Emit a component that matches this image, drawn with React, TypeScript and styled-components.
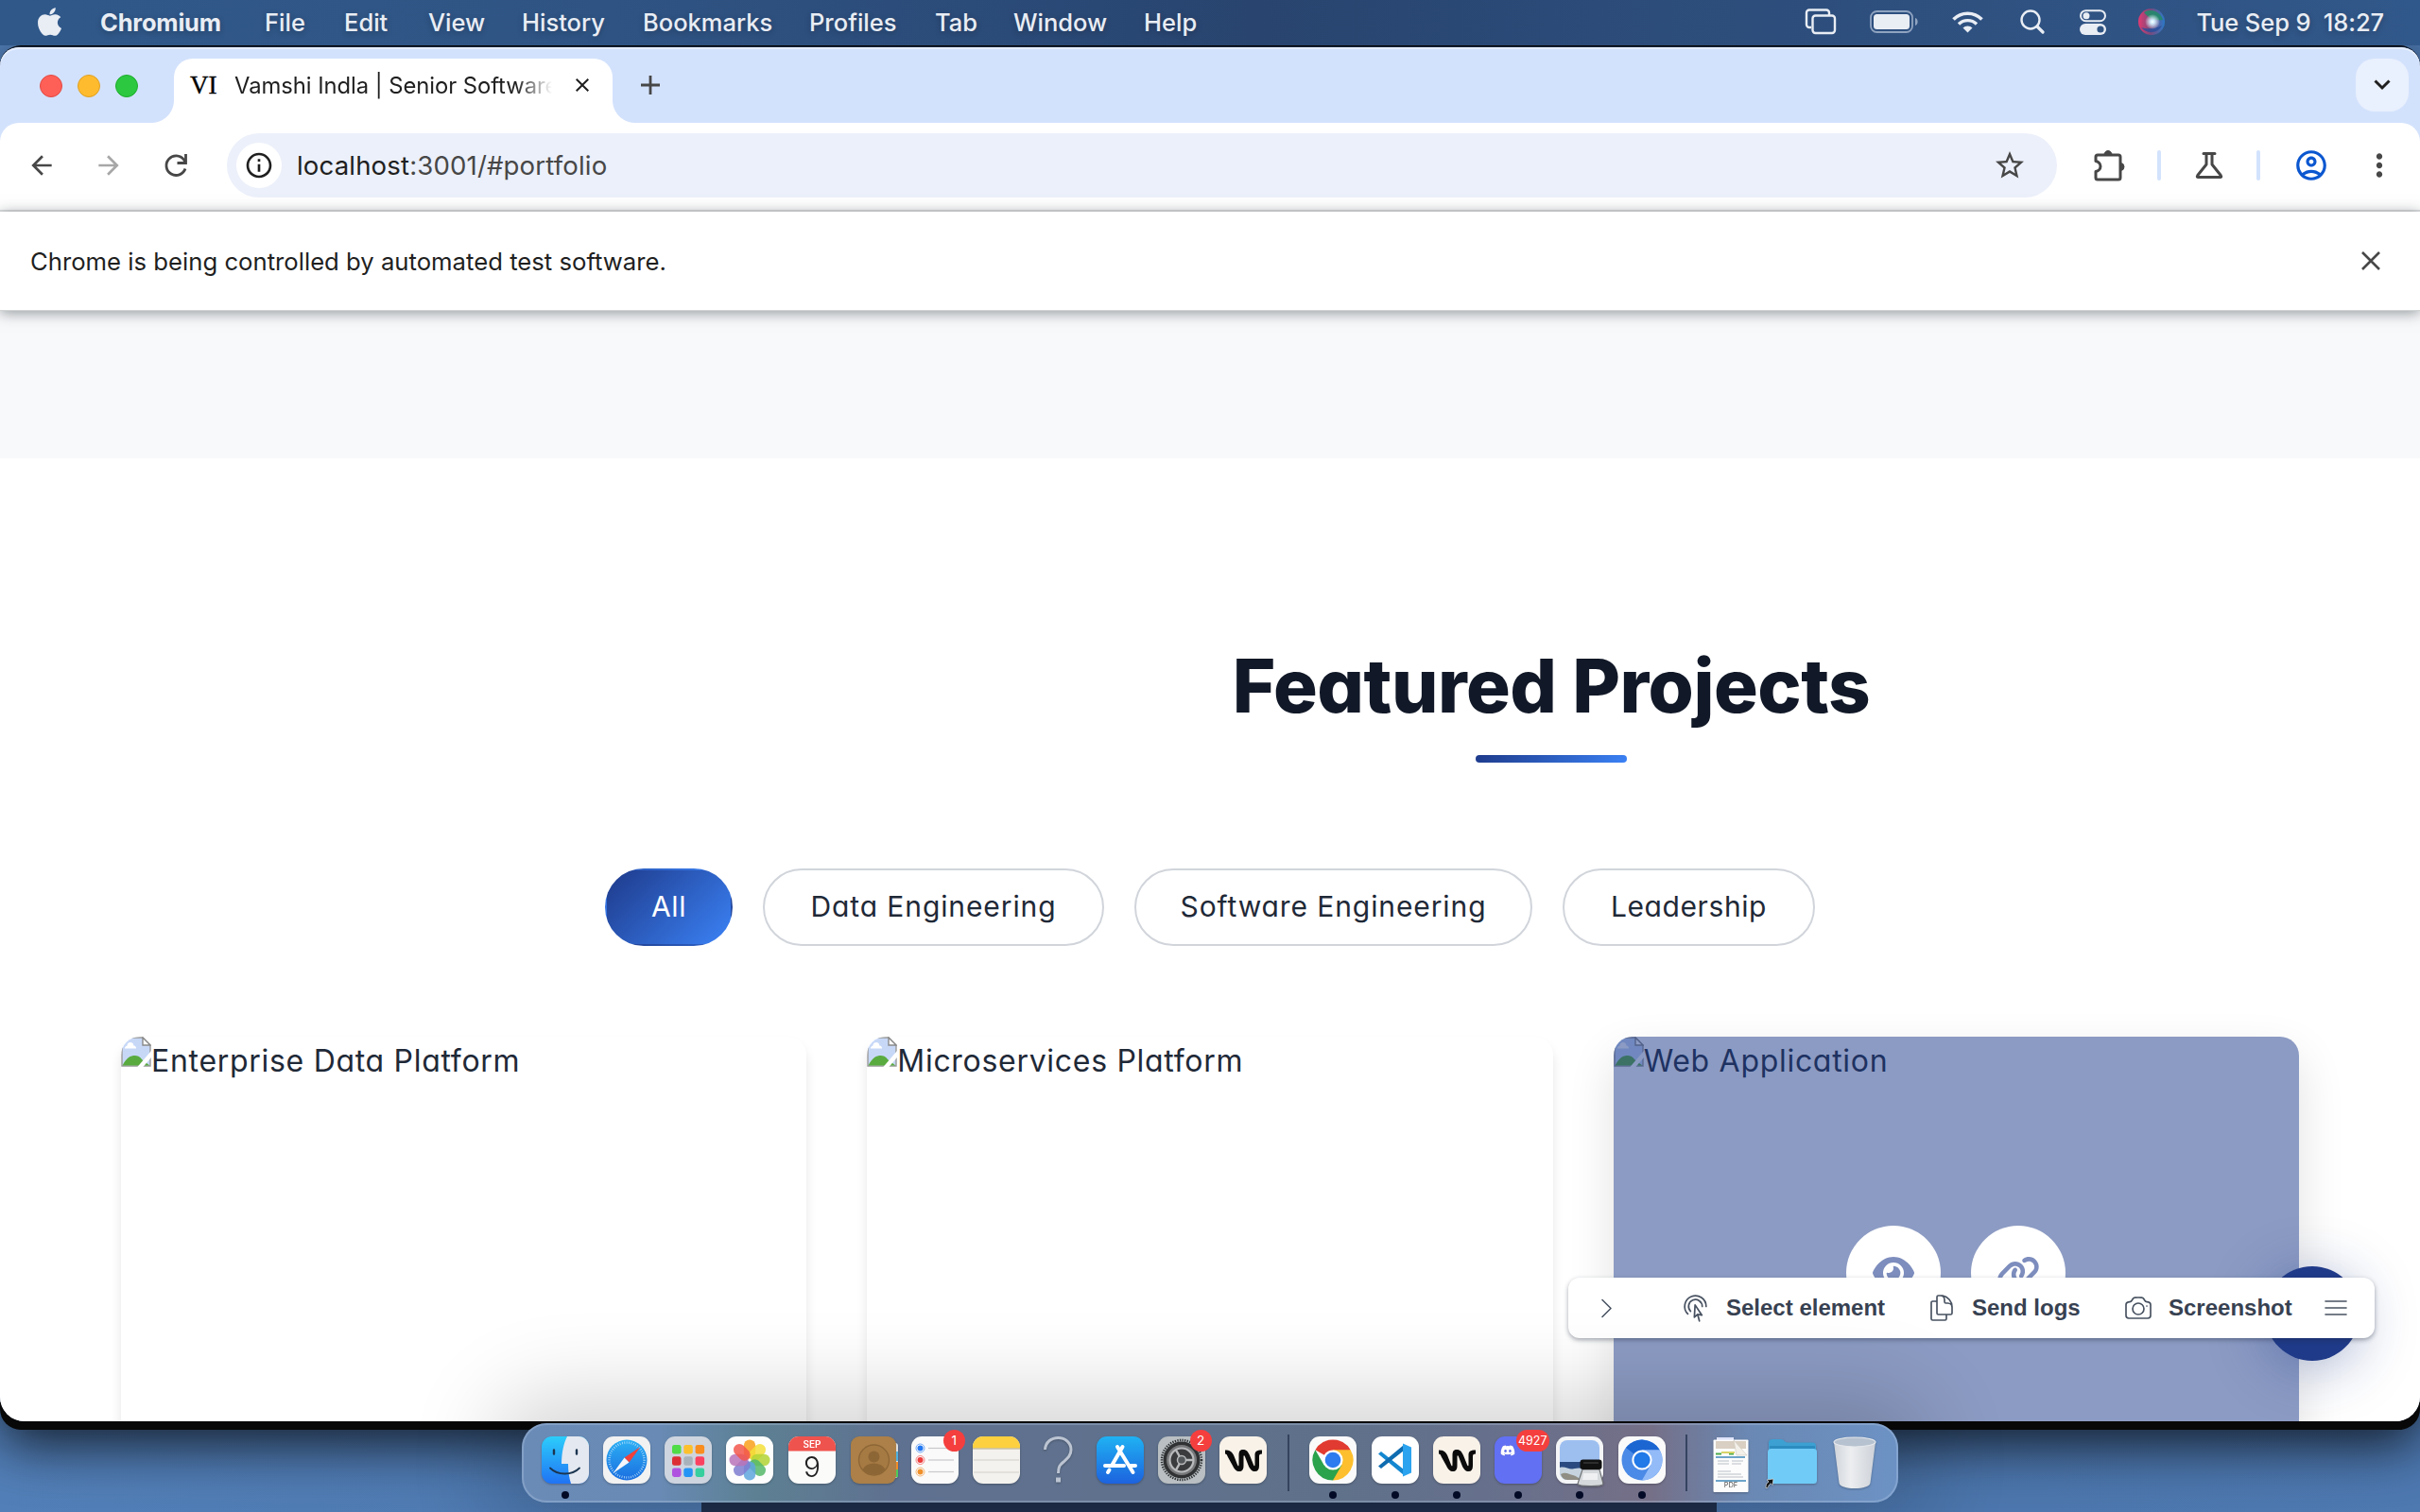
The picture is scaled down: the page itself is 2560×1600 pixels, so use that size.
import React from "react";
import styled, { createGlobalStyle, css } from "styled-components";
import { FaApple, FaEye, FaLink, FaDiscord } from "react-icons/fa6";
import {
  HiOutlineBars3,
  HiOutlineCamera,
  HiOutlineChevronRight,
  HiOutlineCursorArrowRipple,
  HiOutlineDocumentDuplicate,
} from "react-icons/hi2";
import {
  MdArrowBack,
  MdArrowForward,
  MdClose,
  MdInfoOutline,
  MdMoreVert,
  MdOutlineAccountCircle,
  MdStarBorder,
} from "react-icons/md";

const ui = `Inter, "Liberation Sans", sans-serif`;

const GlobalStyle = createGlobalStyle`
  * { box-sizing: border-box; }
  body { margin: 0; background: #4f79b0; overflow: hidden; font-family: ${ui}; }
  svg { display: block; flex: none; }
`;

/* ---------- Desktop ---------- */

const Desktop = styled.div`
  position: relative;
  width: 2560px;
  height: 1600px;
  overflow: hidden;
  background: linear-gradient(90deg, #527fb8 0%, #4a73a8 50%, #4d78b0 100%);
`;

const BackWindow = styled.div`
  position: absolute;
  left: 742px;
  top: 48px;
  width: 1074px;
  height: 1552px;
  background: #20304e;
`;

const UnderWindow = styled.div`
  position: absolute;
  left: 0;
  top: 48px;
  width: 2560px;
  height: 1465px;
  border-radius: 22px;
  background: #080808;
  box-shadow: 0 16px 56px rgba(0, 0, 0, 0.75);
`;

/* ---------- Menu bar ---------- */

const MenuBar = styled.header`
  position: relative;
  display: flex;
  align-items: center;
  height: 48px;
  padding: 0 38px 2px 38px;
  background: linear-gradient(90deg, #30598a 0%, #2f5484 25%, #28446f 52%, #2c4b78 66%, #31588a 100%);
  color: #e9edf4;
  font-size: 25.5px;
  text-shadow: 0 2px 6px rgba(0, 0, 0, 0.25);
`;

const AppleMark = styled(FaApple)`
  width: 29px;
  height: 34px;
  margin-right: 39px;
`;

const MenuItem = styled.span<{ $w: number; $bold?: boolean; $ls?: number }>`
  width: ${(p) => p.$w}px;
  white-space: nowrap;
  font-weight: ${(p) => (p.$bold ? 700 : 500)};
  letter-spacing: ${(p) => p.$ls ?? 0}px;
`;

const StatusArea = styled.div`
  display: flex;
  align-items: center;
  margin-left: auto;
`;

const StatusSlot = styled.span<{ $gap: number }>`
  margin-right: ${(p) => p.$gap}px;
`;

const Clock = styled.span`
  font-weight: 500;
  white-space: pre;
  letter-spacing: -0.1px;
`;

/* ---------- Browser window ---------- */

const Window = styled.main`
  position: absolute;
  left: 0;
  top: 50px;
  width: 2560px;
  height: 1454px;
  display: flex;
  flex-direction: column;
  border-radius: 20px 20px 26px 26px;
  overflow: hidden;
  background: #d3e2fc;
  box-shadow: 0 -1px 0 #16243a, inset 0 2px 0 #e6effe;
`;

const TabStrip = styled.div`
  display: flex;
  align-items: center;
  height: 80px;
  padding: 12px 12px 0 42px;
`;

const Lights = styled.div`
  display: flex;
  gap: 16px;
  width: 142px;
  padding-bottom: 10px;
`;

const Light = styled.i<{ $c: string; $b: string }>`
  width: 24px;
  height: 24px;
  border-radius: 50%;
  background: ${(p) => p.$c};
  border: 1px solid ${(p) => p.$b};
`;

const Tab = styled.div`
  position: relative;
  display: flex;
  align-items: center;
  width: 464px;
  height: 68px;
  padding: 0 18px 12px 17px;
  border-radius: 20px 20px 0 0;
  background: #fff;
  &::before,
  &::after {
    content: "";
    position: absolute;
    bottom: 0;
    width: 24px;
    height: 24px;
  }
  &::before {
    left: -24px;
    background: radial-gradient(circle at 0 0, transparent 23.5px, #fff 24.5px);
  }
  &::after {
    right: -24px;
    background: radial-gradient(circle at 100% 0, transparent 23.5px, #fff 24.5px);
  }
`;

const Favicon = styled.span`
  width: 47px;
  font-family: "Liberation Serif", serif;
  font-size: 27px;
  color: #000;
  -webkit-text-stroke: 0.4px #000;
`;

const TabTitle = styled.span`
  width: 336px;
  overflow: hidden;
  white-space: nowrap;
  font-size: 23.8px;
  letter-spacing: -0.05px;
  color: #1f1f1f;
  mask-image: linear-gradient(90deg, #000 298px, transparent 336px);
`;

const TabClose = styled(MdClose)`
  width: 24px;
  height: 24px;
  margin-left: 20px;
  color: #1f1f1f;
`;

const NewTab = styled.div`
  display: flex;
  margin: 0 auto 12px 28px;
`;

const TabSearch = styled.div`
  display: flex;
  align-items: center;
  justify-content: center;
  width: 56px;
  height: 56px;
  margin-bottom: 12px;
  border-radius: 20px;
  background: #e9f0fe;
`;

const Toolbar = styled.div`
  display: flex;
  align-items: center;
  height: 94px;
  padding: 0 28px 2px 28px;
  border-bottom: 2px solid #dfe1e2;
  border-radius: 20px 20px 0 0;
  background: #fff;
  color: #474747;
`;

const NavIcons = styled.div`
  display: flex;
  gap: 39px;
  width: 212px;
  svg {
    width: 32px;
    height: 32px;
  }
  svg:nth-child(2) {
    color: #a7a7a7;
  }
`;

const Omnibox = styled.div`
  display: flex;
  align-items: center;
  width: 1936px;
  height: 68px;
  padding: 0 32px 0 10px;
  border-radius: 34px;
  background: #ecf0fa;
`;

const SiteInfo = styled.div`
  display: flex;
  align-items: center;
  justify-content: center;
  width: 48px;
  height: 48px;
  margin-right: 16px;
  border-radius: 50%;
  background: #fff;
  color: #1f1f1f;
`;

const Url = styled.span`
  flex: 1;
  font-size: 27.6px;
  letter-spacing: 0.14px;
  color: #474747;
  b {
    font-weight: 400;
    color: #1f1f1f;
  }
`;

const ToolbarActions = styled.div`
  display: flex;
  flex: 1;
  align-items: center;
  justify-content: space-between;
  padding-left: 36px;
  margin-right: -4px;
`;

const Divider = styled.i`
  width: 4px;
  height: 32px;
  border-radius: 2px;
  background: #d3e3fd;
`;

const InfoBar = styled.div`
  position: relative;
  z-index: 1;
  display: flex;
  align-items: center;
  justify-content: space-between;
  height: 105px;
  padding: 0 36px 0 32px;
  background: #fff;
  border-bottom: 1px solid #cfd3d2;
  font-size: 25.7px;
  color: #1f1f1f;
  box-shadow: 0 2px 14px rgba(40, 50, 55, 0.5);
`;

/* ---------- Portfolio page ---------- */

const Page = styled.div`
  position: relative;
  flex: 1;
  overflow: hidden;
  background: #fff;
  color: #1f2937;
  font-feature-settings: "cv11";
`;

const PreviousSection = styled.div`
  height: 156px;
  background: #f8f9fb;
`;

const Portfolio = styled.section`
  display: flex;
  flex-direction: column;
  padding: 192px 128px 0;
`;

const Heading = styled.div`
  display: flex;
  flex-direction: column;
  align-items: center;
  padding-left: 722px;
  margin-bottom: 112px;
`;

const Title = styled.h2`
  margin: 0;
  font-size: 78px;
  line-height: 98px;
  font-weight: 800;
  letter-spacing: -0.5px;
  white-space: nowrap;
  color: #111827;
`;

const Underline = styled.i`
  width: 160px;
  height: 8px;
  margin-top: 24px;
  border-radius: 4px;
  background: linear-gradient(135deg, #1e3a8a, #3b82f6);
`;

const Filters = styled.div`
  display: flex;
  justify-content: center;
  gap: 32px;
  margin-bottom: 96px;
`;

const Filter = styled.button<{ $active?: boolean; $w: number; $ls?: number }>`
  width: ${(p) => p.$w}px;
  height: 82px;
  padding: 0 0 2px;
  border: 2px solid #d1d5db;
  border-radius: 41px;
  background: #fff;
  color: #1f2937;
  font: 400 30px ${ui};
  font-feature-settings: "cv11";
  letter-spacing: ${(p) => p.$ls ?? 0}px;
  white-space: nowrap;
  ${(p) =>
    p.$active &&
    css`
      border-color: transparent;
      background: linear-gradient(135deg, #1e3a8a, #3b82f6);
      color: #fff;
    `}
`;

const Cards = styled.div`
  display: grid;
  grid-template-columns: repeat(3, 725.33px);
  gap: 64px;
`;

const Card = styled.article`
  position: relative;
  display: flex;
  height: 500px;
  border-radius: 20px;
  overflow: hidden;
  background: #fff;
`;

const CardShadow = styled.div<{ $deep?: boolean }>`
  border-radius: 20px;
  box-shadow: ${(p) =>
    p.$deep ? "0 20px 50px rgba(0, 0, 0, 0.12)" : "0 8px 12px rgba(0, 0, 0, 0.1)"};
`;

const AltText = styled.span<{ $ls: number }>`
  font-size: 32px;
  line-height: 52px;
  letter-spacing: ${(p) => p.$ls}px;
  white-space: nowrap;
`;

const Overlay = styled.div`
  position: absolute;
  inset: 0;
  display: flex;
  align-items: center;
  justify-content: center;
  gap: 32px;
  background: rgba(30, 58, 138, 0.51);
`;

const RoundLink = styled.a`
  display: flex;
  align-items: center;
  justify-content: center;
  width: 100px;
  height: 100px;
  border-radius: 50%;
  background: #fff;
  color: #7d8dbd;
`;

const BackToTop = styled.div`
  position: absolute;
  left: 2396px;
  top: 1011px;
  width: 100px;
  height: 100px;
  border-radius: 50%;
  background: #1f3a88;
  box-shadow: 0 8px 60px rgba(30, 58, 138, 0.38);
`;

const DevToolbar = styled.div`
  position: absolute;
  left: 1659px;
  top: 1023px;
  width: 853px;
  height: 64px;
  display: flex;
  align-items: center;
  border-radius: 12px;
  overflow: hidden;
  background: #fff;
  box-shadow: 0 2px 5px rgba(30, 41, 59, 0.4);
  color: #475160;
  svg path {
    stroke-width: 1.25;
  }
`;

const DevCell = styled.div<{ $w: number; $pad: number; $tint?: boolean }>`
  display: flex;
  align-items: center;
  width: ${(p) => p.$w}px;
  height: 100%;
  padding-left: ${(p) => p.$pad}px;
  background: ${(p) => (p.$tint ? "#fcfcfd" : "transparent")};
`;

const DevLabel = styled.span`
  margin-left: 16px;
  font: 700 24px "Liberation Sans", Arial, sans-serif;
  font-feature-settings: normal;
  color: #374151;
  white-space: nowrap;
`;

/* ---------- Dock ---------- */

const Dock = styled.nav`
  position: absolute;
  left: 552px;
  top: 1506px;
  width: 1456px;
  height: 84px;
  display: flex;
  padding: 14px 13px 0;
  border-radius: 26px;
  background: linear-gradient(
    90deg,
    #6b8bb7 0%,
    #688ab4 10%,
    #5d8093 17%,
    #5f7190 27%,
    #5f718a 58%,
    #66708c 70%,
    #756f87 82%,
    #6a88b3 89%,
    #6c92c4 100%
  );
  box-shadow: inset 0 0 0 2px rgba(190, 210, 235, 0.3), 0 0 90px 30px rgba(0, 0, 0, 0.17);
`;

const DockItem = styled.div<{ $w?: number }>`
  position: relative;
  display: flex;
  flex-direction: column;
  align-items: center;
  width: ${(p) => p.$w ?? 66}px;
  margin-left: -0.08px;
  svg {
    overflow: visible;
    filter: drop-shadow(0 1px 1px rgba(0, 0, 0, 0.25));
  }
`;

const RunDot = styled.i`
  width: 8px;
  height: 8px;
  margin-top: 8px;
  border-radius: 50%;
  background: #030a26;
`;

const DockRule = styled.i`
  width: 2px;
  height: 60px;
  margin: -2px 14px 0 14px;
  background: #35435f;
`;

const Badge = styled.span<{ $wide?: boolean }>`
  position: absolute;
  top: -7px;
  right: ${(p) => (p.$wide ? 0 : 1)}px;
  width: ${(p) => (p.$wide ? 35 : 23)}px;
  height: 23px;
  border-radius: 12px;
  background: #f43f3e;
  color: #fff;
  font-size: ${(p) => (p.$wide ? 12.5 : 13.5)}px;
  line-height: 23px;
  text-align: center;
`;

/* ---------- Drawings ---------- */

const Tile = ({ children, fill = "#fafafa" }: { children?: React.ReactNode; fill?: string }) => (
  <svg width="50" height="50" viewBox="0 0 50 50">
    <rect width="50" height="50" rx="11" fill={fill} />
    {children}
  </svg>
);

const Finder = () => (
  <svg width="50" height="50" viewBox="0 0 50 50">
    <defs>
      <linearGradient id="fb" x1="0" y1="0" x2="0" y2="1">
        <stop offset="0" stopColor="#2ccdfb" />
        <stop offset="1" stopColor="#2073f4" />
      </linearGradient>
      <clipPath id="fc"><rect width="50" height="50" rx="11" /></clipPath>
    </defs>
    <g clipPath="url(#fc)">
      <rect width="50" height="50" fill="url(#fb)" />
      <path d="M27 0C23 8 21 18 21 29h7c0 8 1 15 3 21h19V0z" fill="#e4e8f0" />
      <path d="M13 14.500v4M37 14.500v4" stroke="#1c3550" strokeWidth="2.400" strokeLinecap="round" />
      <path d="M9 33.500c8 8 23 8 31 0" fill="none" stroke="#1c3550" strokeWidth="1.800" strokeLinecap="round" />
    </g>
  </svg>
);

const Safari = () => (
  <Tile fill="#f2f2f2">
    <defs>
      <linearGradient id="sa" x1="0" y1="0" x2="0" y2="1">
        <stop offset="0" stopColor="#2cb0f4" />
        <stop offset="1" stopColor="#1b6fe0" />
      </linearGradient>
    </defs>
    <circle cx="25" cy="25" r="21.500" fill="url(#sa)" />
    <circle cx="25" cy="25" r="18.500" fill="none" stroke="#bfe2fb" strokeWidth="2.500" strokeDasharray=".7 1.700" />
    <path d="M39.500 11 27.500 27.500 22.500 22.500z" fill="#f2413b" />
    <path d="M10.500 39 22.500 22.500l5 5z" fill="#f5f7fa" />
  </Tile>
);

const padColors = ["#4fdc46", "#fcc02d", "#f98d1f", "#dc2f35", "#a8b2ba", "#fb4160", "#b052e0", "#2495f5", "#36cf9d"];
const Launchpad = () => (
  <Tile fill="#ced5df">
    {padColors.map((c, i) => (
      <rect key={c} x={8 + (i % 3) * 12.3} y={9 + Math.floor(i / 3) * 12.2} width="9.500" height="9.500" rx="2.300" fill={c} />
    ))}
  </Tile>
);

const petals = ["#f9a01b", "#f3df3a", "#b3d334", "#55b96a", "#5ea6de", "#7e7cd0", "#b873b8", "#f2564b"];
const Photos = () => (
  <Tile fill="#fdfdfd">
    {petals.map((c, i) => (
      <rect key={c} x="18.800" y="3.500" width="12.400" height="20" rx="6.200" fill={c} fillOpacity=".85" transform={`rotate(${i * 45} 25 25)`} />
    ))}
  </Tile>
);

const Calendar = () => (
  <Tile fill="#fbfbfa">
    <path d="M0 15.500V11A11 11 0 0 1 11 0h28a11 11 0 0 1 11 11v4.500z" fill="#ef534e" />
    <text x="25" y="12" textAnchor="middle" fontSize="10" fontWeight="600" fill="#fff" fontFamily={ui}>SEP</text>
    <text x="25" y="42.500" textAnchor="middle" fontSize="30" fontWeight="300" fill="#222" fontFamily={ui}>9</text>
  </Tile>
);

const Contacts = () => (
  <svg width="50" height="50" viewBox="0 0 50 50">
    <rect x="40" y="7" width="11" height="37" rx="3" fill="#ddd" />
    <rect x="45" y="16" width="6" height="10" fill="#4fb2e0" />
    <rect x="45" y="27" width="6" height="8" fill="#ef8c2a" />
    <rect x="45" y="35" width="6" height="8" fill="#50cb5a" />
    <rect x="1" width="48" height="50" rx="9" fill="#ac8048" />
    <circle cx="25.500" cy="25" r="16" fill="#a67a43" stroke="#8d6636" strokeWidth="1.300" />
    <circle cx="25.500" cy="21.500" r="6" fill="#8d6636" />
    <path d="M13.500 35a12.500 9 0 0 1 24 0 16 16 0 0 1-24 0z" fill="#8d6636" />
  </svg>
);

const Reminders = () => (
  <Tile>
    {["#2277f2", "#ee3b3b", "#f0902b"].map((c, i) => (
      <g key={c}>
        <circle cx="9.500" cy={12.5 + i * 12.5} r="3" fill={c} />
        <circle cx="9.500" cy={12.5 + i * 12.5} r="4.500" fill="none" stroke={c} strokeOpacity=".6" />
        <path d={`M18 ${12.5 + i * 12.5}h27`} stroke="#c9c9cc" strokeWidth="1.200" />
      </g>
    ))}
  </Tile>
);

const Notes = () => (
  <Tile fill="#f4f2ee">
    <path d="M0 12.500V11A11 11 0 0 1 11 0h28a11 11 0 0 1 11 11v1.500z" fill="#fcd03f" />
    <path d="M0 13h50" stroke="#b3a98c" strokeWidth="1" />
    <path d="M1 25h48M1 38h48" stroke="#d2cfc9" strokeWidth="1" />
  </Tile>
);

const Question = () => (
  <svg width="50" height="50" viewBox="0 0 50 50">
    <path d="M11.500 14C12 6 18 1.500 25.500 1.500S39 7 39 14c0 6.500-4 9.500-8 13-4 3.300-5.500 5-5.500 12" fill="none" stroke="#bcc4d2" strokeWidth="3" />
    <rect x="23" y="43.500" width="5" height="5" fill="#bcc4d2" />
  </svg>
);

const AppStore = () => (
  <svg width="50" height="50" viewBox="0 0 50 50">
    <defs>
      <linearGradient id="as" x1="0" y1="0" x2="0" y2="1">
        <stop offset="0" stopColor="#1fb2f3" />
        <stop offset="1" stopColor="#1d62de" />
      </linearGradient>
    </defs>
    <rect width="50" height="50" rx="11" fill="url(#as)" />
    <path d="M27.500 11 16 31M22 11l16.500 27M9 31h20M36 31h5M13.500 35.500 12 38" fill="none" stroke="#fff" strokeWidth="4" strokeLinecap="round" />
  </svg>
);

const Settings = () => (
  <Tile fill="#b9bfc2">
    <circle cx="25" cy="25" r="21" fill="none" stroke="#2f3133" strokeWidth="2.500" strokeDasharray="1.300 1.300" />
    <circle cx="25" cy="25" r="19.500" fill="#2f3133" />
    <circle cx="25" cy="25" r="16" fill="#77797b" />
    <circle cx="25" cy="25" r="12.500" fill="#3a3c3e" stroke="#b8babc" strokeWidth="2.200" />
    <path d="M25 25h13M25 25l-6.500-11.300M25 25l-6.500 11.300" stroke="#b8babc" strokeWidth="2.400" />
    <circle cx="25" cy="25" r="4.500" fill="#55585a" stroke="#b8babc" strokeWidth="1.500" />
  </Tile>
);

const Windsurf = () => (
  <Tile fill="#f9f2e9">
    <path
      d="M6 14.500c5 0 7.500 1.500 9.500 6.500l3.500 9c.8 2 1.500 2 1.500-.5V20c0-4.500 1.500-6 4.500-6s5 1.500 7 6l4 10c.8 2 1.500 1.800 1.500-.5V20c0-4 1.500-5.500 7.500-5.500v4c-2.500 0-3 .8-3 3V31c0 4-1.500 6-4.500 6s-5-1.800-7-6.500l-3.500-9c-.8-2-1.500-1.800-1.500.5v9c0 4.300-1.500 6-4.500 6s-5-1.700-7-6L9 22c-1-2.500-1.500-3.500-3-3.500z"
      fill="#0b0b0b"
    />
  </Tile>
);

const Chrome = () => (
  <Tile>
    <path d="M25 25 6.380 14.250A21.500 21.500 0 0 1 43.620 14.250z" fill="#e13a30" />
    <path d="M25 25V14.250H43.620A21.500 21.500 0 0 1 25 46.500z" fill="#fdbf2d" />
    <path d="M25 46.500A21.500 21.500 0 0 1 6.380 14.250L15.700 30.400 25 25l9.300 5.400z" fill="#2ba24c" />
    <circle cx="25" cy="25" r="10.600" fill="#fff" />
    <circle cx="25" cy="25" r="8.300" fill="#2d7bee" />
  </Tile>
);

const ChromiumLogo = () => (
  <Tile>
    <circle cx="25" cy="25" r="21.500" fill="#4b8ae6" />
    <path d="M25 25 8 12A21.500 21.500 0 0 1 43.620 14.250z" fill="#1c66d2" />
    <path d="M25 14.250H43.620A21.500 21.500 0 0 1 25 46.500l9-16z" fill="#93bbf8" />
    <circle cx="25" cy="25" r="10.600" fill="#fff" />
    <circle cx="25" cy="25" r="8.600" fill="#2279e8" />
  </Tile>
);

const VsCode = () => (
  <Tile fill="#fff">
    <path d="M7 18.500 10 16l24 19v6z" fill="#1487d0" />
    <path d="M7 31.500 10 34l24-19V9z" fill="#0f6cb0" />
    <path d="M33 7.500 42 11.500v27L33 42.500z" fill="#2ba3ee" />
  </Tile>
);

const Discord = () => (
  <Tile fill="#6270f3">
    <FaDiscord x="6" y="7" width="38" height="38" color="#fff" />
  </Tile>
);

const Preview = () => (
  <Tile fill="#f4f5f7">
    <rect x="4" y="4" width="42" height="42" rx="8" fill="#9dbff0" />
    <path d="M4 27h42v8H4z" fill="#2b4a80" />
    <path d="M4 33c6-2 10 3 16 1s14 2 26 0v4a8 8 0 0 1-8 8H12a8 8 0 0 1-8-8z" fill="#c6d3df" />
    <path d="M5 40c5-3 9 0 13 1s6 3 8 5H12a8 8 0 0 1-7-6z" fill="#8f8d84" />
    <path d="M28 35h18l4 15c0 2-4 2.500-13 2.500S23 52 23 50z" fill="#d6d9dc" stroke="#6d7073" strokeWidth="1.200" />
    <path d="M29 39h15v7H28z" fill="#eef0f2" />
    <rect x="25.500" y="24.500" width="23" height="10.500" rx="3" fill="#111" />
    <path d="M29 28h16" stroke="#4a4a4a" />
  </Tile>
);

const PdfDoc = () => (
  <svg width="38" height="60" viewBox="0 0 38 60">
    <path d="M4 1h18v6H4z" fill="#dfe4fa" />
    <rect x=".5" y="3.500" width="37" height="55.500" rx="1" fill="#fcfcfc" />
    <path d="M3 5h32v8H3z" fill="#d9cfc2" />
    <path d="M3 18.500h6M17 18.500h5" stroke="#4caa4a" strokeWidth="2" />
    <path d="M9 17h14" stroke="#d8d46a" strokeWidth="2" />
    <path d="M3 22h31M3 47h32" stroke="#3e87b8" strokeWidth="1.600" />
    <path d="M5 26h12M20 26h12M5 29h12M20 29h10M5 37h14M5 40h25M5 43h27" stroke="#b9bfc6" strokeWidth="1" />
    <path d="M22 4 36 20H25z" fill="#f3f0ea" stroke="#cfc8bc" strokeWidth=".6" />
    <text x="19" y="54" textAnchor="middle" fontSize="7.500" fill="#555" fontFamily={ui}>PDF</text>
  </svg>
);

const Folder = () => (
  <svg width="54" height="50" viewBox="0 0 54 50">
    <path d="M2 7c0-2.500 1.500-4 4-4h9c3 0 4 3.500 7 3.500h26c3 0 4 1.500 4 4V16H2z" fill="#3da0d2" />
    <path d="M3 10h48v8H3z" fill="#2c8cc0" />
    <rect x="1" y="13" width="52" height="37" rx="3.500" fill="#70cbf7" />
    <path d="M-1 54.500c0-4 1-5.500 3-6.500l-2-2 7-1-1 6.500-1.800-1.800C2 51.500 1.500 53 .8 54.500z" fill="#111" stroke="#ddd" strokeWidth=".7" />
  </svg>
);

const Trash = () => (
  <svg width="46" height="56" viewBox="0 0 46 56">
    <defs>
      <linearGradient id="tr" x1="0" y1="0" x2="1" y2="0">
        <stop offset="0" stopColor="#d0d4da" />
        <stop offset=".4" stopColor="#eceef0" />
        <stop offset="1" stopColor="#cdd1d8" />
      </linearGradient>
    </defs>
    <path d="M1 6 6.500 49c.5 8 32.500 8 33 0L45 6z" fill="url(#tr)" />
    <ellipse cx="23" cy="6" rx="22" ry="5" fill="#b7c2d0" stroke="#e6e9ed" strokeWidth="1.200" />
  </svg>
);

const BrokenImage = () => (
  <svg width="32" height="32" viewBox="0 0 16 16">
    <path d="M.5.500h11l4 4v11H.5z" fill="#c7d8f7" stroke="#9a9a9a" strokeWidth=".7" />
    <path d="M11.500.500v4h4z" fill="#fff" stroke="#8a8a8a" strokeWidth=".7" />
    <path d="M2 6.200C2 5 3 5 3.200 4.700 3.500 2.500 6.500 2.500 6.700 4.700c1 0 1.300.7 1.300 1.500z" fill="#fff" />
    <path d="M.8 15.200C3 11 5 10 7.500 10c2 0 3.200 1.500 4 2.500l3.700 2.700z" fill="#5aab3f" />
    <path d="M16 7.500 8.700 16h3L16 11z" fill="#fff" />
  </svg>
);

const PuzzleIcon = () => (
  <svg width="36" height="36" viewBox="0 0 36 36">
    <path d="M5 9a2 2 0 0 1 2-2h22a2 2 0 0 1 2 2v22a2 2 0 0 1-2 2H7a2 2 0 0 1-2-2v-6.500c2.500-.5 5-2.500 5-5.500s-2.500-5-5-5.500z" fill="none" stroke="#474747" strokeWidth="3" strokeLinejoin="round" />
    <path d="M14 7a4 4.500 0 0 1 8 0zM31 15.500a4 4 0 0 1 0 8z" fill="#474747" stroke="#474747" />
  </svg>
);

const FlaskIcon = () => (
  <svg width="32" height="32" viewBox="0 0 32 32" fill="none" stroke="#474747" strokeWidth="3" strokeLinejoin="round" strokeLinecap="round">
    <path d="M10 3.500h12M13 4v11L3.800 26.500c-1 1.500-.5 2 .7 2h23c1.200 0 1.700-.5.700-2L19 15V4" />
  </svg>
);

const ReloadIcon = () => (
  <svg viewBox="0 0 32 32" fill="none" stroke="#474747" strokeWidth="2.800">
    <path d="M26 19.500A10.300 10.300 0 1 1 24.500 10L26.500 13" />
    <path d="M26.500 4v9.500H17.500" />
  </svg>
);

const StackIcon = () => (
  <svg width="34" height="28" viewBox="0 0 34 28" fill="none" stroke="#e9edf4" strokeWidth="2.400">
    <path d="M7 20H5a3 3 0 0 1-3-3V4.500a3 3 0 0 1 3-3h18a3 3 0 0 1 3 3V7" />
    <rect x="8.500" y="7.500" width="23.500" height="18.500" rx="3" />
  </svg>
);

const BatteryIcon = () => (
  <svg width="51" height="24" viewBox="0 0 51 24">
    <rect x="1" y="1" width="44" height="22" rx="6.500" fill="none" stroke="#8fa3c0" strokeWidth="1.800" />
    <rect x="4" y="4" width="38" height="16" rx="3.500" fill="#e9edf4" />
    <path d="M48 8c3.500 1 3.500 7 0 8z" fill="#8fa3c0" />
  </svg>
);

const WifiIcon = () => (
  <svg width="33" height="24" viewBox="0 0 33 24" fill="none" stroke="#e9edf4">
    <path d="M1.500 9.500a21 21 0 0 1 30 0" strokeWidth="3.600" />
    <path d="M7 14.500a13.500 13.500 0 0 1 19 0" strokeWidth="3.400" />
    <path d="M11.500 18.500a7 7 0 0 1 10 0l-5 5z" fill="#e9edf4" stroke="none" />
  </svg>
);

const SearchIcon = () => (
  <svg width="26" height="26" viewBox="0 0 26 26" fill="none" stroke="#e9edf4" strokeLinecap="round">
    <circle cx="11" cy="11" r="9.500" strokeWidth="2.400" />
    <path d="m18 18 6 6" strokeWidth="3.200" />
  </svg>
);

const ControlIcon = () => (
  <svg width="28" height="27" viewBox="0 0 28 27">
    <rect x="1" y="1.200" width="26" height="11" rx="5.500" fill="none" stroke="#e9edf4" strokeWidth="2" />
    <circle cx="7" cy="6.700" r="3.500" fill="#e9edf4" />
    <rect x="0" y="15" width="28" height="12" rx="6" fill="#e9edf4" />
    <circle cx="22" cy="21" r="3.600" fill="#2f5483" />
  </svg>
);

const SiriIcon = () => (
  <svg width="28" height="28" viewBox="0 0 28 28">
    <defs>
      <radialGradient id="s0"><stop offset="0" stopColor="#fff" /><stop offset=".25" stopColor="#cfeeff" /><stop offset="1" stopColor="#fff" stopOpacity="0" /></radialGradient>
      <linearGradient id="s1"><stop offset="0" stopColor="#e23a70" /><stop offset=".45" stopColor="#7a4a7c" /><stop offset="1" stopColor="#2b78c8" /></linearGradient>
    </defs>
    <circle cx="14" cy="14" r="14" fill="url(#s1)" />
    <path d="M6 4a13.500 13.500 0 0 1 20 8c-6 1-14 0-20-8z" fill="#23896b" fillOpacity=".9" />
    <path d="M3 20c6 2 14 2 22-2a13 13 0 0 1-22 2z" fill="#264f9c" fillOpacity=".8" />
    <circle cx="15" cy="14" r="8" fill="url(#s0)" />
  </svg>
);

/* ---------- Content ---------- */

const menus: { label: string; w: number; bold?: boolean; ls?: number }[] = [
  { label: "Chromium", w: 174, bold: true, ls: -0.2 },
  { label: "File", w: 84 },
  { label: "Edit", w: 89 },
  { label: "View", w: 99 },
  { label: "History", w: 128 },
  { label: "Bookmarks", w: 176 },
  { label: "Profiles", w: 133 },
  { label: "Tab", w: 83 },
  { label: "Window", w: 138 },
  { label: "Help", w: 60 },
];

const filters = [
  { label: "All", w: 135, active: true, ls: 0.6 },
  { label: "Data Engineering", w: 361, ls: 0.9 },
  { label: "Software Engineering", w: 421, ls: 0.9 },
  { label: "Leadership", w: 267, ls: 0.6 },
];

const pinned: { icon: () => React.JSX.Element; badge?: string; running?: boolean }[] = [
  { icon: Finder, running: true },
  { icon: Safari },
  { icon: Launchpad },
  { icon: Photos },
  { icon: Calendar },
  { icon: Contacts },
  { icon: Reminders, badge: "1" },
  { icon: Notes },
  { icon: Question },
  { icon: AppStore },
  { icon: Settings, badge: "2" },
  { icon: Windsurf },
];

const running: { icon: () => React.JSX.Element; badge?: string; running?: boolean }[] = [
  { icon: Chrome, running: true },
  { icon: VsCode, running: true },
  { icon: Windsurf, running: true },
  { icon: Discord, running: true, badge: "4927" },
  { icon: Preview, running: true },
  { icon: ChromiumLogo, running: true },
];

const DockApps = ({ items }: { items: typeof pinned }) => (
  <>
    {items.map(({ icon: Icon, badge, running: on }, i) => (
      <DockItem key={i}>
        <Icon />
        {on && <RunDot />}
        {badge && <Badge $wide={badge.length > 2}>{badge}</Badge>}
      </DockItem>
    ))}
  </>
);

export default function App() {
  return (
    <>
      <GlobalStyle />
      <Desktop>
        <BackWindow />
        <UnderWindow />
        <MenuBar>
          <AppleMark />
          {menus.map((m) => (
            <MenuItem key={m.label} $w={m.w} $bold={m.bold} $ls={m.ls}>{m.label}</MenuItem>
          ))}
          <StatusArea>
            <StatusSlot $gap={35}><StackIcon /></StatusSlot>
            <StatusSlot $gap={36}><BatteryIcon /></StatusSlot>
            <StatusSlot $gap={39}><WifiIcon /></StatusSlot>
            <StatusSlot $gap={37}><SearchIcon /></StatusSlot>
            <StatusSlot $gap={34}><ControlIcon /></StatusSlot>
            <StatusSlot $gap={33}><SiriIcon /></StatusSlot>
            <Clock>{"Tue Sep 9  18:27"}</Clock>
          </StatusArea>
        </MenuBar>

        <Window>
          <TabStrip>
            <Lights>
              <Light $c="#fe5f57" $b="#e14942" />
              <Light $c="#febb2e" $b="#dfa023" />
              <Light $c="#2bc840" $b="#1eac2c" />
            </Lights>
            <Tab>
              <Favicon>VI</Favicon>
              <TabTitle>Vamshi Indla | Senior Software Engineer</TabTitle>
              <TabClose />
            </Tab>
            <NewTab>
              <svg width="24" height="24" viewBox="0 0 24 24">
                <path d="M12 2v20M2 12h20" stroke="#474747" strokeWidth="2.800" />
              </svg>
            </NewTab>
            <TabSearch>
              <svg width="20" height="12" viewBox="0 0 20 12">
                <path d="m2.500 1.500 7.500 7.500 7.500-7.500" fill="none" stroke="#1f1f1f" strokeWidth="3" />
              </svg>
            </TabSearch>
          </TabStrip>
          <Toolbar>
            <NavIcons>
              <MdArrowBack />
              <MdArrowForward />
              <ReloadIcon />
            </NavIcons>
            <Omnibox>
              <SiteInfo><MdInfoOutline size={32} /></SiteInfo>
              <Url><b>localhost</b>:3001/#portfolio</Url>
              <MdStarBorder size={36} />
            </Omnibox>
            <ToolbarActions>
              <PuzzleIcon />
              <Divider />
              <FlaskIcon />
              <Divider />
              <MdOutlineAccountCircle size={38} color="#0b57d0" />
              <MdMoreVert size={38} />
            </ToolbarActions>
          </Toolbar>
          <InfoBar>
            <span>Chrome is being controlled by automated test software.</span>
            <svg width="32" height="32" viewBox="0 0 32 32">
              <path d="M7 7l18 18M25 7 7 25" stroke="#474747" strokeWidth="2.600" />
            </svg>
          </InfoBar>

          <Page>
            <PreviousSection />
            <Portfolio>
              <Heading>
                <Title>Featured Projects</Title>
                <Underline />
              </Heading>
              <Filters>
                {filters.map((f) => (
                  <Filter key={f.label} $w={f.w} $active={f.active} $ls={f.ls}>{f.label}</Filter>
                ))}
              </Filters>
              <Cards>
                <CardShadow>
                  <Card><BrokenImage /><AltText $ls={0.7}>Enterprise Data Platform</AltText></Card>
                </CardShadow>
                <CardShadow>
                  <Card><BrokenImage /><AltText $ls={0.7}>Microservices Platform</AltText></Card>
                </CardShadow>
                <CardShadow $deep>
                  <Card>
                    <BrokenImage /><AltText $ls={0.7}>Web Application</AltText>
                    <Overlay>
                      <RoundLink><FaEye size={44} /></RoundLink>
                      <RoundLink><FaLink size={46} /></RoundLink>
                    </Overlay>
                  </Card>
                </CardShadow>
              </Cards>
            </Portfolio>

            <BackToTop />
            <DevToolbar>
              <DevCell $w={113} $pad={26}><HiOutlineChevronRight size={29} /></DevCell>
              <DevCell $w={243} $pad={5}><HiOutlineCursorArrowRipple size={33} /><DevLabel>Select element</DevLabel></DevCell>
              <DevCell $w={208} $pad={23}><HiOutlineDocumentDuplicate size={32} /><DevLabel>Send logs</DevLabel></DevCell>
              <DevCell $w={232} $pad={23}><HiOutlineCamera size={32} /><DevLabel>Screenshot</DevLabel></DevCell>
              <HiOutlineBars3 size={32} />
            </DevToolbar>
          </Page>
        </Window>

        <Dock>
          <DockApps items={pinned} />
          <DockRule />
          <DockApps items={running} />
          <DockRule />
          <DockItem $w={64}><PdfDoc /></DockItem>
          <DockItem $w={68}><Folder /></DockItem>
          <DockItem $w={66}><Trash /></DockItem>
        </Dock>
      </Desktop>
    </>
  );
}
